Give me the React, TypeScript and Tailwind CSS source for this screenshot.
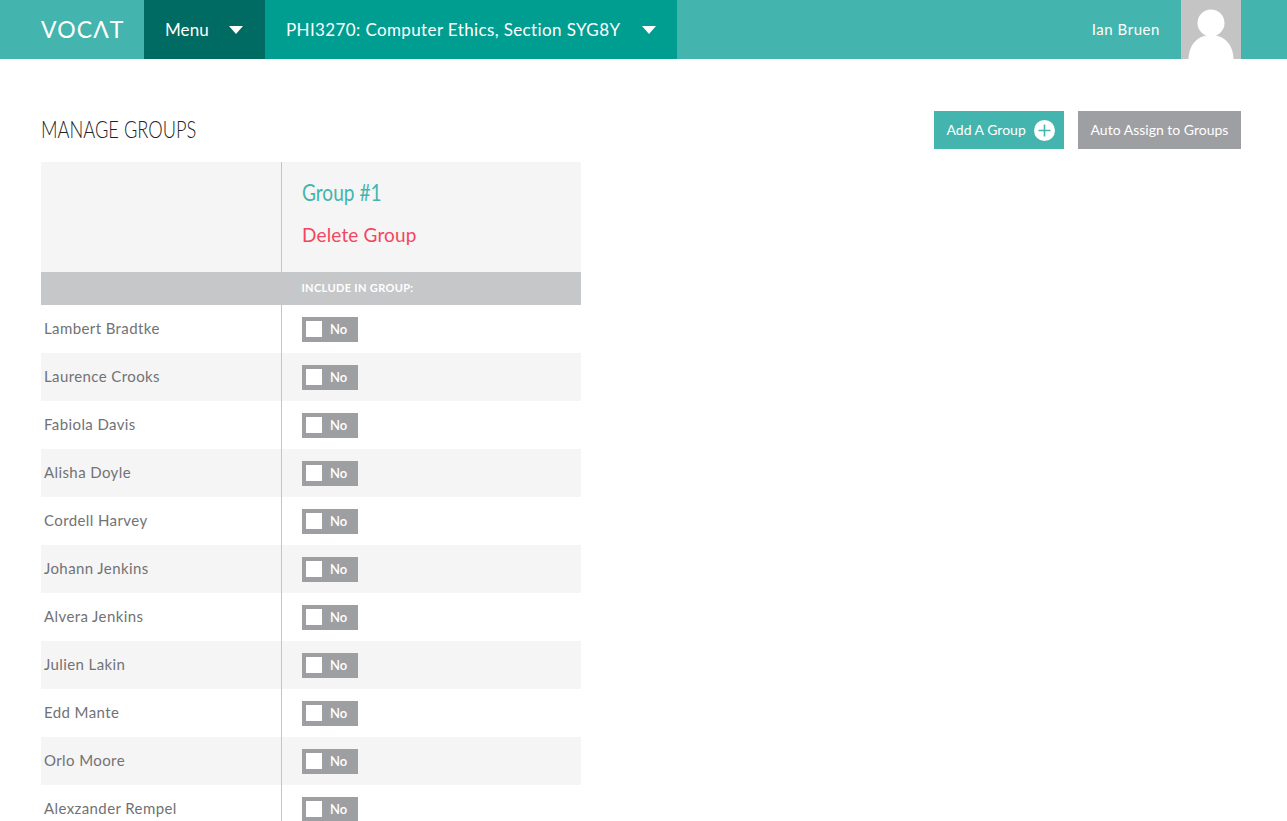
import React from "react";

const students = [
  "Lambert Bradtke",
  "Laurence Crooks",
  "Fabiola Davis",
  "Alisha Doyle",
  "Cordell Harvey",
  "Johann Jenkins",
  "Alvera Jenkins",
  "Julien Lakin",
  "Edd Mante",
  "Orlo Moore",
  "Alexzander Rempel",
];

const Caret = ({ className }: { className: string }) => (
  <svg className={className} width="14" height="8" viewBox="0 0 14 8">
    <path d="M0 0h14L7 8z" fill="#fff" />
  </svg>
);

function Toggle() {
  return (
    <div className="flex h-[25px] w-[56px] items-center bg-[#9e9fa3] pl-[4px]">
      <span className="h-[16px] w-[16px] bg-white" />
      <span className="ml-[8px] text-[13px] font-semibold leading-none text-white">No</span>
    </div>
  );
}

export default function App() {
  return (
    <div className="h-[821px] overflow-hidden bg-white font-['Lato','Liberation_Sans',sans-serif] text-[#717276]">
      <header className="flex h-[59px] items-stretch bg-[#43b5ae] text-white">
        <div className="flex w-[144px] items-center pl-[41px] text-[23px] leading-none tracking-[1.1px]">
          VOCΛT
        </div>
        <div className="flex w-[121px] items-center bg-[#006b62] pl-[21px] text-[17px] tracking-[0.1px]">
          Menu
          <Caret className="ml-[20px]" />
        </div>
        <div className="flex w-[412px] items-center bg-[#009e90] pl-[21px] text-[17px] tracking-[0.38px]">
          PHI3270: Computer Ethics, Section SYG8Y
          <Caret className="ml-[22px]" />
        </div>
        <div className="ml-auto flex items-center pr-[46px]">
          <span className="mr-[21px] text-[15px] tracking-[0.55px]">Ian Bruen</span>
          <div className="h-[59px] w-[60px] bg-[#c4c4c5]">
            <svg width="60" height="59" viewBox="0 0 60 59">
              <circle cx="30" cy="23" r="13.5" fill="#fff" />
              <path d="M7.5 59C8 44 17 35 30 35s22 9 22.500 24z" fill="#fff" />
            </svg>
          </div>
        </div>
      </header>

      <main className="px-[41px]">
        <div className="flex h-[103px] items-end justify-between pb-[13px]">
          <h1 className="mb-[7px] origin-left scale-x-[0.76] whitespace-nowrap text-[24px] font-light leading-[26px] text-[#222225]">
            MANAGE GROUPS
          </h1>
          <div className="flex gap-[14px] pr-[5px] text-[14px] text-white">
            <button className="flex h-[38px] w-[130px] items-center bg-[#43b5ae] pb-[1px] pl-[12.5px]">
              Add A Group
              <svg className="ml-[8.5px] mt-[1px]" width="21" height="21" viewBox="0 0 21 21">
                <circle cx="10.500" cy="10.500" r="10.500" fill="#fff" />
                <path d="M10.500 4.500v12M4.500 10.500h12" stroke="#43b5ae" strokeWidth="1.600" />
              </svg>
            </button>
            <button className="flex h-[38px] w-[163px] items-center justify-center bg-[#9e9fa3] pb-[1px]">
              Auto Assign to Groups
            </button>
          </div>
        </div>

        <div className="w-[540px]">
          <div className="flex h-[110px] bg-[#f5f5f5]">
            <div className="w-[241px] border-r border-[#c4c5c7]" />
            <div className="pl-[20px]">
              <div className="mt-[16px] origin-left scale-x-[0.83] whitespace-nowrap text-[23px] leading-[28px] text-[#43b5ae]">
                Group #1
              </div>
              <div className="mt-[17px] text-[19px] leading-[24px] tracking-[0.15px] text-[#f4455f]">Delete Group</div>
            </div>
          </div>
          <div className="flex h-[33px] items-center bg-[#c6c7c9] text-[11px] font-bold tracking-[0.35px] text-white">
            <div className="w-[241px]" />
            <div className="pl-[19.5px]">INCLUDE IN GROUP:</div>
          </div>
          {students.map((name, i) => (
            <div key={name} className={`flex h-[48px] ${i % 2 ? "bg-[#f5f5f5]" : "bg-white"}`}>
              <div className="flex w-[241px] items-center border-r border-[#c4c5c7] pb-[1px] pl-[3px] text-[15px] tracking-[0.4px]">
                {name}
              </div>
              <div className="flex items-center pl-[20px]">
                <Toggle />
              </div>
            </div>
          ))}
        </div>
      </main>
    </div>
  );
}
